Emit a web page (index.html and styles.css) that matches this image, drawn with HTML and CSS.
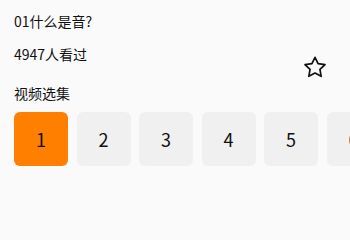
FILE: index.html
```html
<!DOCTYPE html>
<html lang="zh">
<head>
<meta charset="utf-8">
<link rel="stylesheet" href="styles.css">
</head>
<body>
<div class="page">
  <div class="header">
    <div class="info">
      <div class="title">01什么是音?</div>
      <div class="views">4947人看过</div>
    </div>
    <svg class="star" width="24" height="24" viewBox="0 0 24 24">
      <polygon points="12,2.3 15.06,8.59 21.99,9.56 16.95,14.41 18.17,21.29 12,18 5.83,21.29 7.05,14.41 2.01,9.56 8.94,8.59" fill="none" stroke="#111" stroke-width="1.7" stroke-linejoin="round"/>
    </svg>
  </div>
  <div class="section">视频选集</div>
  <div class="episodes">
    <div class="ep active">1</div>
    <div class="ep">2</div>
    <div class="ep">3</div>
    <div class="ep">4</div>
    <div class="ep">5</div>
    <div class="ep">6</div>
  </div>
</div>
</body>
</html>
```
FILE: styles.css
```css
html, body {
  margin: 0;
  padding: 0;
  background: #fafafa;
}
body {
  font-family: "Noto Sans CJK SC", "Noto Sans", sans-serif;
  color: #111;
  width: 350px;
  height: 207px;
  overflow: hidden;
}
.page {
  padding: 11px 0 0 14px;
}
.header {
  display: flex;
  align-items: flex-start;
  justify-content: space-between;
  padding-right: 23.5px;
}
.title, .views, .section {
  font-size: 14px;
  line-height: 20px;
}
.views {
  margin-top: 13px;
}
.star {
  margin-top: 44px;
}
.section {
  margin-top: 4px;
}
.episodes {
  display: flex;
  gap: 8.5px;
  margin-top: 9px;
  overflow: hidden;
}
.ep {
  flex: 0 0 54px;
  height: 54px;
  border-radius: 6px;
  background: #f0f0f0;
  display: flex;
  align-items: center;
  justify-content: center;
  font-size: 18px;
  color: #111;
}
.ep.active {
  background: #ff7f00;
}
```
